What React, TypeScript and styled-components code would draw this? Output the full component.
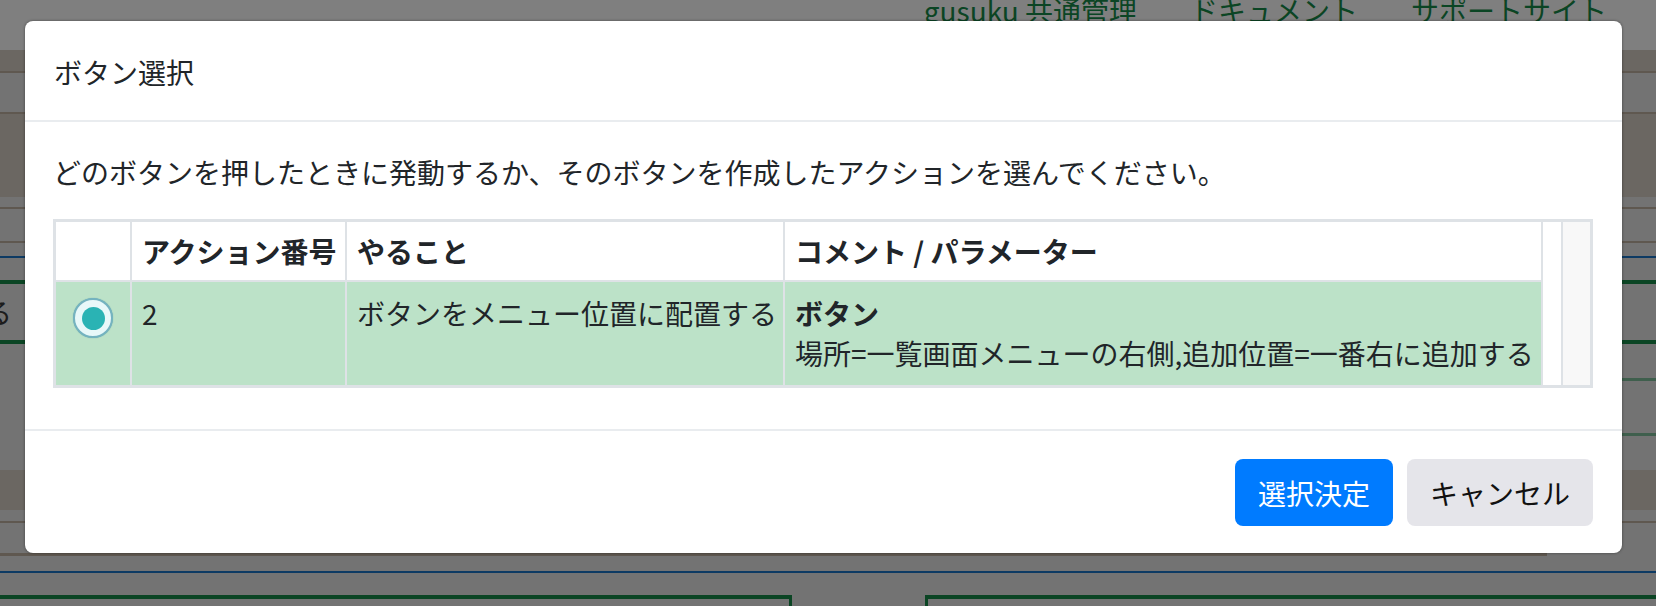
import React from "react";
import styled, { createGlobalStyle } from "styled-components";

const GlobalStyle = createGlobalStyle`
  html, body { margin: 0; padding: 0; }
  body {
    font-family: "Noto Sans CJK JP", "Noto Sans", sans-serif;
    color: #212529;
    background: #ffffff;
  }
  * { box-sizing: border-box; }
`;

const FONT = `"Noto Sans CJK JP", "Noto Sans", sans-serif`;

/* ---------- underlying page (dimmed by the overlay) ---------- */

const Page = styled.div`
  position: relative;
  width: 1656px;
  height: 606px;
  overflow: hidden;
`;

const Backdrop = styled.div`
  display: flex;
  flex-direction: column;
  width: 100%;
`;

const TopBar = styled.header`
  height: 50px;
  background: #ffffff;
  display: flex;
  justify-content: flex-end;
  align-items: flex-start;
  gap: 53px;
  padding-right: 49px;
`;

const NavLink = styled.span`
  font-family: ${FONT};
  font-size: 28px;
  line-height: 20px;
  color: #168a48;
  white-space: nowrap;
`;

const Stripe = styled.div<{ $h: number; $bg: string }>`
  height: ${(p) => p.$h}px;
  background: ${(p) => p.$bg};
  flex-shrink: 0;
`;

const PartialStripe = styled.div<{ $h: number; $align: "start" | "end" }>`
  height: ${(p) => p.$h}px;
  display: flex;
  justify-content: ${(p) => (p.$align === "end" ? "flex-end" : "flex-start")};
  background: #e6e6e6;
  flex-shrink: 0;
`;

const Bar = styled.div<{ $w: number; $bg: string }>`
  width: ${(p) => p.$w}px;
  height: 100%;
  background: ${(p) => p.$bg};
`;

const TextRow = styled.div`
  height: 56px;
  background: #e6e6e6;
  display: flex;
  align-items: center;
  flex-shrink: 0;
`;

const CutLabel = styled.div`
  width: 12px;
  overflow: hidden;
  display: flex;
  justify-content: flex-end;
  font-family: ${FONT};
  font-size: 28px;
  line-height: 40px;
  color: #383838;
  white-space: nowrap;
`;

const BoxRow = styled.div`
  display: flex;
  justify-content: space-between;
  height: 11px;
  background: #e6e6e6;
`;

const GreenBox = styled.div<{ $w: number; $side: "left" | "right" }>`
  width: ${(p) => p.$w}px;
  height: 100%;
  border-top: 4px solid #168a48;
  ${(p) => (p.$side === "left" ? "border-left" : "border-right")}: 3px solid #168a48;
  background: #e6e6e6;
`;

const Overlay = styled.div`
  position: absolute;
  inset: 0;
  background: rgba(0, 0, 0, 0.5);
`;

/* ---------- modal ---------- */

const ModalLayer = styled.div`
  position: absolute;
  inset: 0;
  padding: 21px 0 0 25px;
`;

const Dialog = styled.div`
  width: 1597px;
  background: #ffffff;
  border-radius: 8px;
  box-shadow: 0 0 3px rgba(0, 0, 0, 0.45);
  font-family: ${FONT};
  color: #212529;
`;

const Header = styled.div`
  padding: 30px 28px 27px 29px;
  border-bottom: 2px solid #e9ecef;
`;

const Title = styled.h5`
  margin: 0;
  font-size: 28px;
  font-weight: 400;
  line-height: 42px;
`;

const Body = styled.div`
  padding: 29px 29px 28px 28px;
`;

const Lead = styled.p`
  margin: 0 0 26px;
  font-size: 28px;
  line-height: 42px;
`;

const Frame = styled.div`
  border: 3px solid #dee2e6;
  background: #ffffff;
  margin-bottom: 13px;
`;

const Grid = styled.div`
  display: grid;
  grid-template-columns: 76px 215px 438px 758px 20px 1fr;
  grid-template-rows: auto auto;
`;

const HeadCell = styled.div`
  padding: 9px 10px;
  font-size: 28px;
  line-height: 40px;
  font-weight: 700;
  color: #212529;
  border-right: 2px solid #dee2e6;
  border-bottom: 2px solid #dee2e6;
  background: #ffffff;
  white-space: nowrap;
`;

const Cell = styled.div`
  padding: 11px 10px 12px;
  font-size: 28px;
  line-height: 40px;
  color: #212529;
  border-right: 2px solid #dee2e6;
  background: #bce2c8;
  white-space: nowrap;
`;

const RadioCell = styled(Cell)`
  display: flex;
  justify-content: center;
  align-items: flex-start;
  padding-top: 16px;
`;

const Radio = styled.span`
  width: 40px;
  height: 40px;
  border-radius: 50%;
  border: 2px solid #74b3c0;
  background: #e8f8f9;
  display: flex;
  align-items: center;
  justify-content: center;
  box-shadow: 0 0 1px rgba(60, 130, 145, 0.6);
`;

const RadioDot = styled.span`
  width: 23px;
  height: 23px;
  border-radius: 50%;
  background: #2ab3b4;
`;

const Strong = styled.div`
  font-weight: 700;
`;

const Spacer = styled.div`
  grid-column: 5;
  grid-row: 1 / 3;
  background: #ffffff;
  border-right: 2px solid #dee2e6;
`;

const Track = styled.div`
  grid-column: 6;
  grid-row: 1 / 3;
  background: #f8f8f8;
`;

const Footer = styled.div`
  border-top: 2px solid #e9ecef;
  padding: 28px 29px 27px;
  display: flex;
  justify-content: flex-end;
  gap: 14px;
`;

const Button = styled.button<{ $variant: "primary" | "secondary" }>`
  font-family: ${FONT};
  font-size: 28px;
  line-height: 40px;
  padding: 13.5px 23px;
  border: none;
  border-radius: 8px;
  cursor: pointer;
  background: ${(p) => (p.$variant === "primary" ? "#007bff" : "#e5e5ea")};
  color: ${(p) => (p.$variant === "primary" ? "#ffffff" : "#111111")};
`;

export default function App() {
  return (
    <>
      <GlobalStyle />
      <Page>
        <Backdrop>
          <TopBar>
            <NavLink>gusuku 共通管理</NavLink>
            <NavLink>ドキュメント</NavLink>
            <NavLink>サポートサイト</NavLink>
          </TopBar>
          <Stripe $h={21} $bg="#d7cec4" />
          <Stripe $h={2} $bg="#bfb1a0" />
          <Stripe $h={39} $bg="#e6e6e6" />
          <Stripe $h={2} $bg="#bfb1a0" />
          <Stripe $h={83} $bg="#d7cec4" />
          <Stripe $h={10} $bg="#e6e6e6" />
          <Stripe $h={2} $bg="#bfb1a0" />
          <Stripe $h={32} $bg="#e6e6e6" />
          <Stripe $h={2} $bg="#bfb1a0" />
          <Stripe $h={13} $bg="#e6e6e6" />
          <Stripe $h={2} $bg="#1b75c7" />
          <Stripe $h={22} $bg="#e6e6e6" />
          <Stripe $h={4} $bg="#168a48" />
          <TextRow>
            <CutLabel>る</CutLabel>
          </TextRow>
          <Stripe $h={4} $bg="#168a48" />
          <Stripe $h={34} $bg="#e6e6e6" />
          <PartialStripe $h={3} $align="end">
            <Bar $w={400} $bg="#7fbf9b" />
          </PartialStripe>
          <Stripe $h={52} $bg="#e6e6e6" />
          <PartialStripe $h={3} $align="end">
            <Bar $w={400} $bg="#7fbf9b" />
          </PartialStripe>
          <Stripe $h={34} $bg="#e6e6e6" />
          <Stripe $h={40} $bg="#d7cec4" />
          <Stripe $h={11} $bg="#e6e6e6" />
          <Stripe $h={2} $bg="#bfb1a0" />
          <Stripe $h={30} $bg="#e6e6e6" />
          <PartialStripe $h={3} $align="start">
            <Bar $w={1547} $bg="#bfb1a0" />
          </PartialStripe>
          <Stripe $h={15} $bg="#e6e6e6" />
          <Stripe $h={2} $bg="#1b75c7" />
          <Stripe $h={22} $bg="#e6e6e6" />
          <BoxRow>
            <GreenBox $w={792} $side="right" />
            <GreenBox $w={731} $side="left" />
          </BoxRow>
        </Backdrop>
        <Overlay />
        <ModalLayer>
          <Dialog role="dialog" aria-modal="true">
            <Header>
              <Title>ボタン選択</Title>
            </Header>
            <Body>
              <Lead>
                どのボタンを押したときに発動するか、そのボタンを作成したアクションを選んでください。
              </Lead>
              <Frame>
                <Grid>
                  <HeadCell />
                  <HeadCell>アクション番号</HeadCell>
                  <HeadCell>やること</HeadCell>
                  <HeadCell>コメント / パラメーター</HeadCell>
                  <Spacer />
                  <Track />
                  <RadioCell>
                    <Radio>
                      <RadioDot />
                    </Radio>
                  </RadioCell>
                  <Cell>2</Cell>
                  <Cell>ボタンをメニュー位置に配置する</Cell>
                  <Cell>
                    <Strong>ボタン</Strong>
                    <div>場所=一覧画面メニューの右側,追加位置=一番右に追加する</div>
                  </Cell>
                </Grid>
              </Frame>
            </Body>
            <Footer>
              <Button $variant="primary">選択決定</Button>
              <Button $variant="secondary">キャンセル</Button>
            </Footer>
          </Dialog>
        </ModalLayer>
      </Page>
    </>
  );
}
